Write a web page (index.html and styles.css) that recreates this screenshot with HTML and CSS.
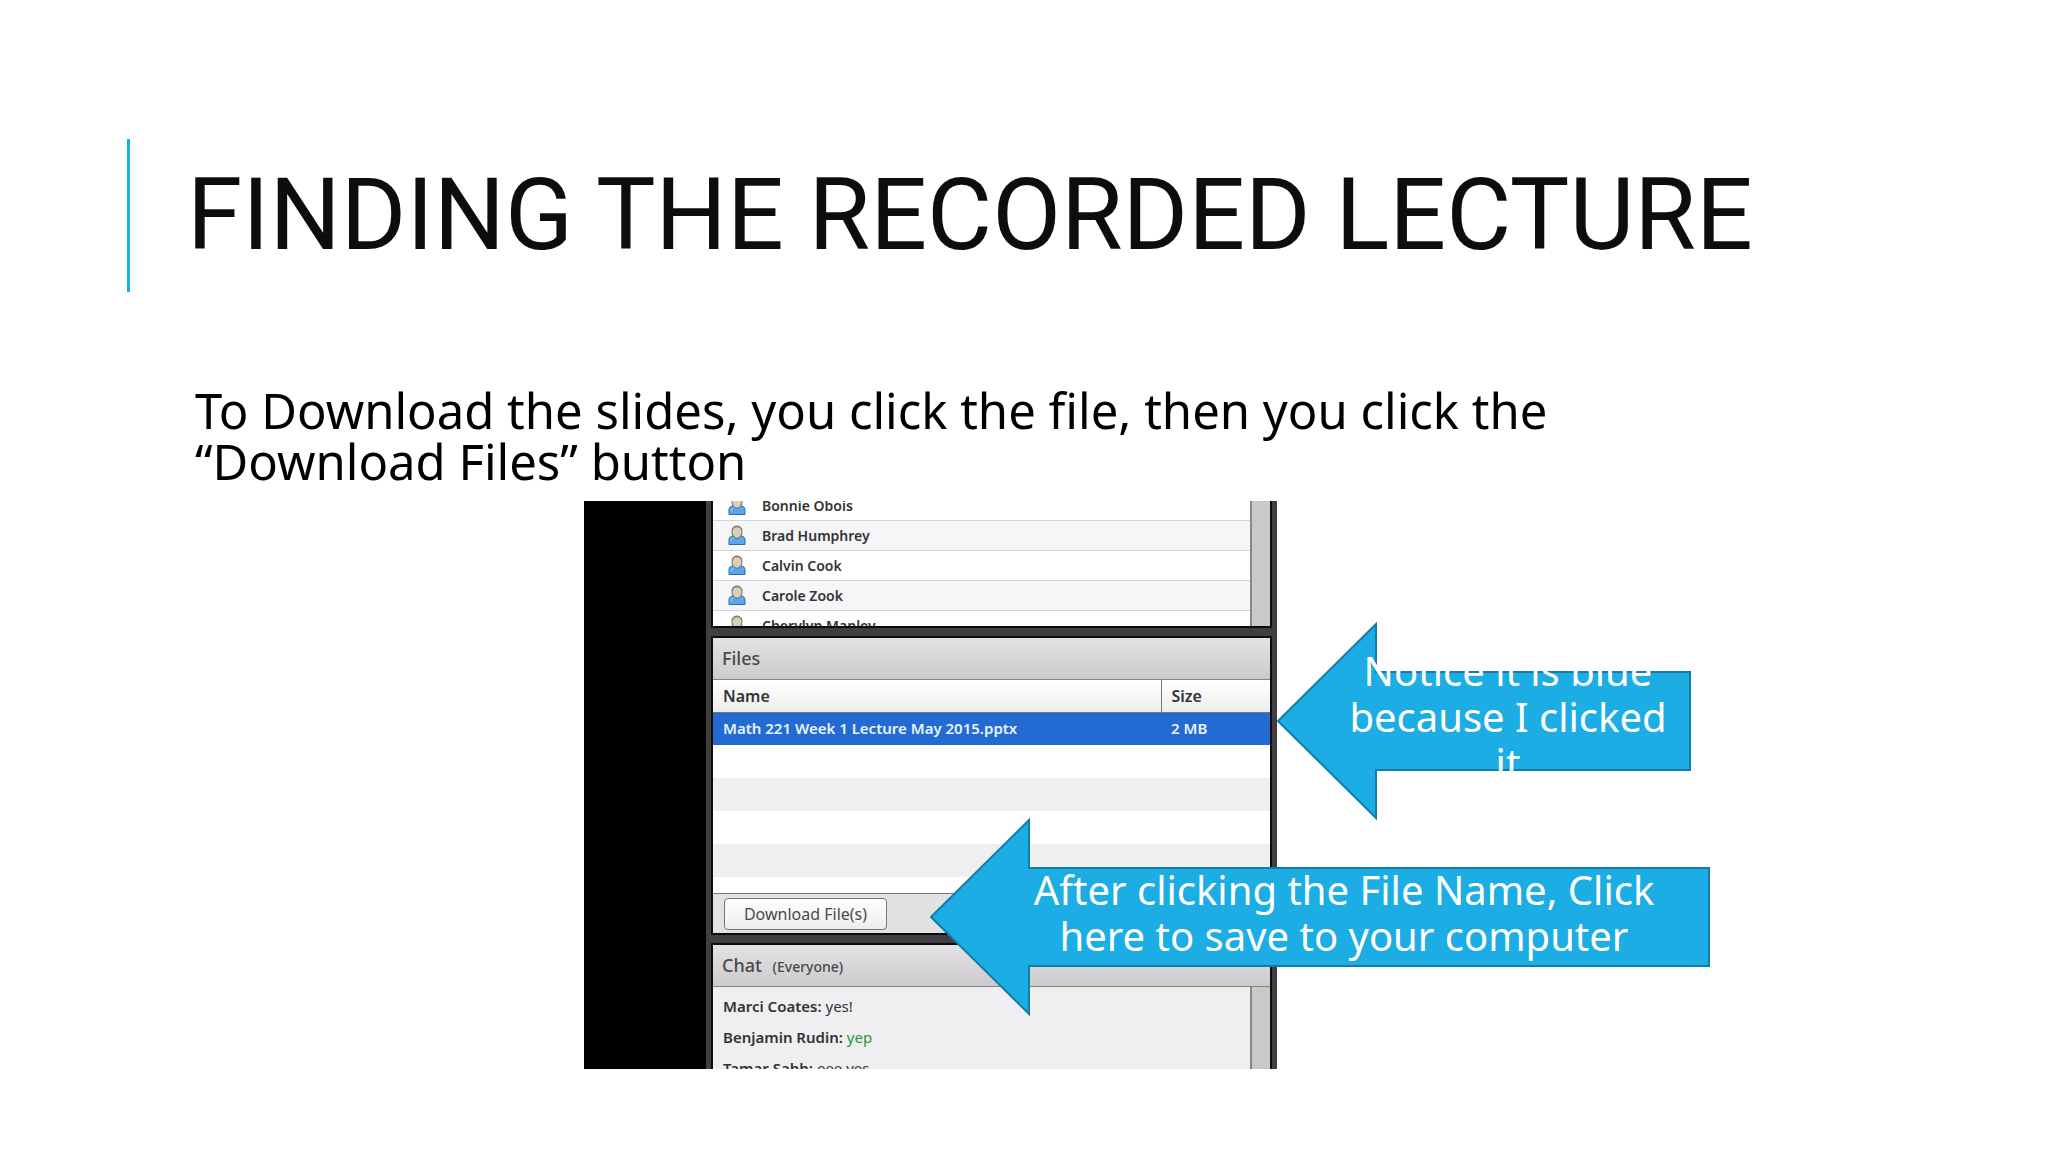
FILE: index.html
```html
<!DOCTYPE html>
<html lang="en">
<head>
	<meta charset="utf-8">
	<title>Finding the Recorded Lecture</title>
	<link rel="stylesheet" href="styles.css">
</head>
<body>
	<!-- person icon used by every row of the attendee list -->
	<svg class="defs" width="0" height="0" aria-hidden="true">
		<symbol id="person" viewBox="0 0 18 21">
			<path d="M1 19.5V15c0-2.500 1.500-4 4-4h8c2.500 0 4 1.500 4 4v4.500z" fill="#5ba6ea" stroke="#2b6cae"/>
			<path d="M3 16.500c0-2 1-3 2.500-3.500" fill="none" stroke="#a5d2fa"/>
			<path d="M9 1c3.200 0 5 2 5 5.200 0 3.800-2 7-5 7s-5-3.200-5-7C4 3 5.800 1 9 1z" fill="#d9cfba" stroke="#6d665a"/>
			<path d="M4.500 5C5.500 2.500 7 2 9 2s3.500.500 4.500 3" fill="none" stroke="#8b8373"/>
		</symbol>
	</svg>

	<div class="slide">
		<h1 class="title">Finding the Recorded Lecture</h1>

		<div class="content">
			<p class="lead">To Download the slides, you click the file, then you click the “Download Files” button</p>

			<div class="figure">
				<div class="screen">
					<div class="pods">
						<div class="pod people">
							<ul class="names">
								<li><svg class="icon"><use href="#person"/></svg>Bonnie Obois</li>
								<li><svg class="icon"><use href="#person"/></svg>Brad Humphrey</li>
								<li><svg class="icon"><use href="#person"/></svg>Calvin Cook</li>
								<li><svg class="icon"><use href="#person"/></svg>Carole Zook</li>
								<li><svg class="icon"><use href="#person"/></svg>Cherylyn Manley</li>
							</ul>
							<div class="scrollbar"></div>
						</div>

						<div class="pod files">
							<h2 class="bar">Files</h2>
							<table class="list">
								<thead>
									<tr><th>Name</th><th class="size">Size</th></tr>
								</thead>
								<tbody>
									<tr class="selected"><td>Math 221 Week 1 Lecture May 2015.pptx</td><td class="size">2 MB</td></tr>
									<tr><td></td><td></td></tr>
									<tr><td></td><td></td></tr>
									<tr><td></td><td></td></tr>
									<tr><td></td><td></td></tr>
								</tbody>
							</table>
							<div class="footer">
								<button type="button" class="download">Download File(s)</button>
							</div>
						</div>

						<div class="pod chat">
							<h2 class="bar">Chat <span class="room">(Everyone)</span></h2>
							<div class="chat-body">
								<div class="messages">
									<p><b>Marci Coates:</b> yes!</p>
									<p class="green"><b>Benjamin Rudin:</b> yep</p>
									<p><b>Tamar Sahh:</b> eee yes</p>
								</div>
								<div class="scrollbar"></div>
							</div>
						</div>
					</div>
				</div>

				<!-- callouts -->
				<div class="arrow arrow-selected">
					<svg class="shape" viewBox="0 0 414 198"><path d="M1 99L99 2v48h314v98H99v48z"/></svg>
					<p>Notice it is blue because I clicked it</p>
				</div>
				<div class="arrow arrow-download">
					<svg class="shape" viewBox="0 0 780 198"><path d="M1 99L99 2v48h680v98H99v48z"/></svg>
					<p>After clicking the File Name, Click here to save to your computer</p>
				</div>
			</div>
		</div>
	</div>
</body>
</html>
```
FILE: styles.css
```css
* {
	box-sizing: border-box;
}

body {
	margin: 0;
	background: #fff;
	color: #000;
	font-family: "Noto Sans", sans-serif;
}

h1, h2, p, ul {
	margin: 0;
	padding: 0;
	font-weight: normal;
}

.defs {
	position: absolute;
}

.slide {
	padding: 139px 127px 80px;
}

.title {
	padding: 0 0 2px 57px;
	border-left: 3px solid #1cade4;
	color: #0d0d0d;
	font-family: Roboto, "Liberation Sans", sans-serif;
	font-size: 100px;
	line-height: 151px;
	text-transform: uppercase;
}

.content {
	padding: 93px 60px 0 68px;
}

.lead {
	max-width: 1440px;
	font-size: 49px;
	line-height: 51px;
}

/* cropped meeting window */
.figure {
	position: relative;
	width: 693px;
	margin: 14px 0 0 389px;
}

.screen {
	height: 568px;
	padding-left: 122px;
	overflow: hidden;
	background: #000;
}

.pods {
	display: flex;
	flex-direction: column;
	gap: 8px;
	padding: 0 5px;
	background: #403e40;
	color: #333;
	font-size: 16px;
}

.pod {
	border: 2px solid #0c0c0c;
	background: #fff;
}

.people {
	display: flex;
	height: 127px;
	border-top: 0;
	overflow: hidden;
}

/* the list is scrolled a little */
.names {
	flex: 1;
	margin-top: -10px;
	list-style: none;
	font-size: 14px;
	font-weight: 600;
}

.names li {
	display: flex;
	align-items: center;
	gap: 16px;
	height: 30px;
	padding-left: 15px;
	border-bottom: 1px solid #d4d4d8;
}

.names li:nth-child(even) {
	background: #f6f5f8;
}

.icon {
	width: 18px;
	height: 21px;
}

.scrollbar {
	width: 20px;
	border-left: 2px solid #88868a;
	background: #c9c8ca;
}

.bar {
	height: 42px;
	padding-left: 9px;
	border-bottom: 1px solid #858487;
	background: linear-gradient(#e3e2e4, #cbcacc);
	color: #4a484b;
	font-size: 18px;
	font-weight: 500;
	line-height: 40px;
}

.room {
	margin-left: 6px;
	font-size: 14px;
}

.list {
	width: 100%;
	border-collapse: collapse;
	table-layout: fixed;
}

.list th, .list td {
	height: 33px;
	padding: 0 10px;
	text-align: left;
	white-space: nowrap;
}

.list th {
	height: 32px;
	border-bottom: 1px solid #77767a;
	background: linear-gradient(#fff, #ededef);
	font-weight: 600;
}

.list .size {
	width: 109px;
}

.list th.size {
	border-left: 1px solid #77767a;
}

.list tbody tr:nth-child(odd) {
	background: #efeef1;
}

.list tbody .selected td {
	padding-bottom: 2px;
	background: #236bd3;
	color: #e9f3ff;
	font-size: 15px;
	font-weight: 600;
}

.footer {
	margin-top: 16px;
	padding: 4px 11px 3px;
	border-top: 1px solid #77767a;
	background: #e2e1e4;
}

.download {
	display: block;
	width: 163px;
	height: 32px;
	padding: 0;
	border: 1px solid #77767a;
	border-radius: 4px;
	background: linear-gradient(#fff, #ededef);
	color: #4a484b;
	font-family: inherit;
	font-size: 16px;
}

.chat-body {
	display: flex;
	height: 120px;
	background: #efeef0;
}

.messages {
	flex: 1;
	padding: 4px 10px;
	font-size: 15px;
	line-height: 31px;
}

.messages b {
	font-weight: 600;
}

.green {
	color: #2c9440;
}

.green b {
	color: #333;
}

/* block arrows, the text may run over the shaft */
.arrow {
	position: absolute;
	display: flex;
	align-items: center;
	height: 198px;
	color: #fff;
	font-size: 40px;
	line-height: 46px;
	text-align: center;
}

.arrow p {
	position: relative;
	flex: 1;
	padding: 0 20px 8px 68px;
}

.arrow-selected {
	top: 121px;
	left: 693px;
	width: 414px;
}

.arrow-download {
	top: 317px;
	left: 346px;
	width: 780px;
}

.shape {
	position: absolute;
	inset: 0;
	width: 100%;
	height: 100%;
	fill: #1cade4;
	stroke: #117ea7;
	stroke-width: 2px;
}
```
